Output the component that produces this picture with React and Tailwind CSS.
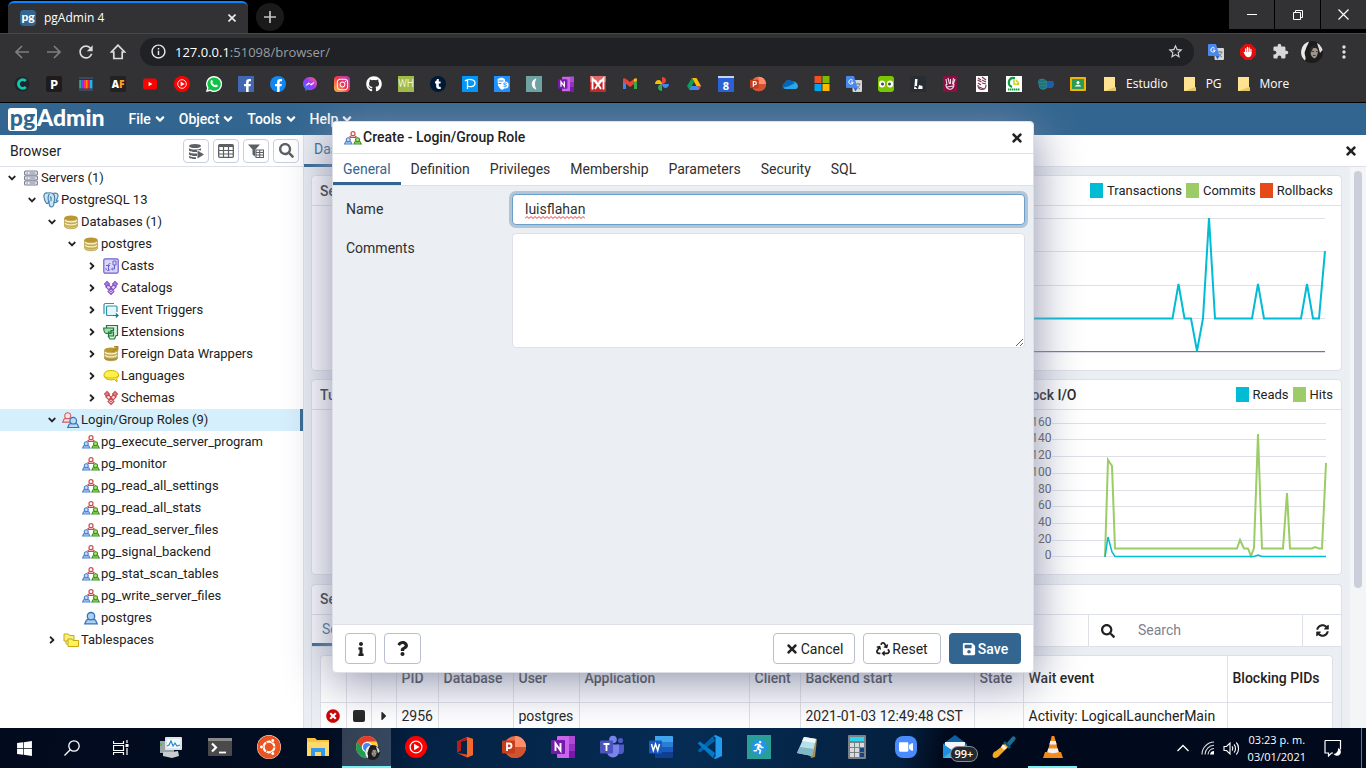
import React from "react";
import {
  FaAngleDown, FaAngleRight, FaTimes, FaSearch, FaSyncAlt, FaInfo, FaQuestion, FaRecycle, FaSave,
  FaWhatsapp, FaGithub, FaInstagram, FaFacebookF, FaTumblr, FaUbuntu,
  FaWindows, FaCaretRight, FaTimesCircle, FaVideo, FaRunning,
} from "react-icons/fa";
import { MdExtension, MdRefresh, MdOutlineStarBorder, MdMoreVert, MdOutlineInfo } from "react-icons/md";

const Svg = ({ s = 16, box = "0 0 16 16", className = "", children }) => (
  <svg width={s} height={s} viewBox={box} fill="none" className={`shrink-0 ${className}`} aria-hidden="true">
    {children}
  </svg>
);

/* ---------- shared brand marks ---------- */

const YtMusic = ({ s }) => (
  <Svg s={s}>
    <circle cx="8" cy="8" r="8" fill="#f00" />
    <circle cx="8" cy="8" r="4.3" stroke="#fff" strokeWidth="0.9" />
    <path d="M6.6 5.6L10.6 8L6.6 10.4Z" fill="#fff" />
  </Svg>
);

const OneNote = ({ s }) => (
  <Svg s={s} box="0 0 24 24">
    <rect x="6" y="1" width="18" height="22" rx="1" fill="#ca64ea" />
    <rect x="18" y="1" width="6" height="8" fill="#ae4bd5" />
    <rect x="18" y="9" width="6" height="7" fill="#9332bf" />
    <rect x="18" y="16" width="6" height="7" fill="#7719aa" />
    <rect x="0" y="5" width="14" height="14" rx="1" fill="#7719aa" />
    <path d="M4.500 16V8.500L9.500 15.500V8" stroke="#fff" strokeWidth="1.900" />
  </Svg>
);

const PowerPoint = ({ s }) => (
  <Svg s={s} box="0 0 24 24">
    <circle cx="13" cy="12" r="11" fill="#ed6c47" />
    <path d="M13 1a11 11 0 0 1 11 11H13Z" fill="#ff8f6b" />
    <path d="M2 12h22a11 11 0 0 1-22 0Z" fill="#d35230" />
    <rect x="0" y="5.500" width="13" height="13" rx="1" fill="#c43e1c" />
    <path d="M5 16V8.500h2.200a2.100 2.100 0 0 1 0 4.600H5" stroke="#fff" strokeWidth="1.800" />
  </Svg>
);

const Translate = () => (
  <Svg>
    <rect x="6.500" y="4" width="9.500" height="12" rx="1" fill="#d6d6d6" />
    <path d="M9.500 8h5M12 7v1.200M13.800 8c-.5 2.300-2 3.800-3.700 4.800M10.500 9.500c.8 1.600 2 2.700 3.500 3.500" stroke="#607d8b" strokeWidth="0.900" />
    <path d="M1 0h7l3.500 12H1a1 1 0 0 1-1-1V1a1 1 0 0 1 1-1Z" fill="#4a87ee" />
    <path d="M7.500 12h4L9.500 15.500Z" fill="#3367d6" />
    <path d="M6.600 4.300A2.200 2.200 0 1 0 7.200 6.200H5" stroke="#fff" strokeWidth="1" />
  </Svg>
);

const PgFavicon = () => (
  <span className="flex h-4 w-4 items-center justify-center rounded-sm bg-[#326690] font-['Lato',sans-serif] text-[12px] font-black leading-none text-white">
    <span className="pb-0.5">pg</span>
  </span>
);

const Avatar = ({ s }) => (
  <Svg s={s} box="0 0 22 22">
    <circle cx="11" cy="11" r="11" fill="#1c1c1c" />
    <path d="M8 .5A11 11 0 0 0 4 19.400C6 16 2 13 4.500 9C5.500 5 7 4 8 .5Z" fill="#e8e8e8" />
    <path d="M16 2a11 11 0 0 1 5.600 7L19 12Z" fill="#ddd" />
    <path d="M9 8c2-3 7-2.500 8 1.500 0 4-1.500 7-3.500 8C10 16 9 12 9 8Z" fill="#9d938d" />
    <path d="M8.500 9c0-5 8-6 9.500 0-2-2-5-2.500-6-1.500S10 12 9.500 13Z" fill="#2b2624" />
    <path d="M11 10.500h2M15 10.500h1.500M12 14.500h2.500" stroke="#2b2624" strokeWidth="0.800" />
  </Svg>
);

/* ---------- browser bookmarks ---------- */

const Tile = ({ cls, children }) => (
  <span className={`flex h-4 w-4 items-center justify-center overflow-hidden leading-none ${cls}`}>{children}</span>
);

const bookmarks = [
  ["Crehana", <Svg><circle cx="8" cy="8" r="7.500" fill="#212529" /><path d="M11.800 5A4.300 4.300 0 1 0 11.800 11" stroke="#0cc9b4" strokeWidth="2.800" /></Svg>],
  ["Platzi", <Tile cls="rounded-xs bg-[#1f1b1b] font-['Open_Sans',sans-serif] text-[13px] font-bold text-white">P</Tile>],
  ["Colors", <Svg><path d="M1 2h14M1 14h14" stroke="#3d5170" strokeWidth="1.500" /><path d="M2.200 4v8.500" stroke="#27b08d" strokeWidth="2" /><path d="M4.300 4v8.500" stroke="#7a3ff0" strokeWidth="2.200" /><path d="M6.500 4v8.500" stroke="#ff2d6f" strokeWidth="2.200" /><path d="M8.700 4v8.500" stroke="#ff8a00" strokeWidth="2.200" /><path d="M10.900 4v8.500" stroke="#ff1744" strokeWidth="2.200" /><path d="M13.200 4v8.500" stroke="#18b6f6" strokeWidth="2.400" /></Svg>],
  ["AnimeFLV", <Tile cls="rounded-xs bg-[#222] font-['Open_Sans',sans-serif] text-[10px] font-extrabold text-white">A<span className="text-[#ff9e1b]">F</span></Tile>],
  ["YouTube", <Svg><rect x="1" y="2.500" width="14" height="11" rx="2.500" fill="#f00" /><path d="M6.600 5.800L10.400 8L6.600 10.200Z" fill="#fff" /></Svg>],
  ["YouTube Music", <YtMusic s={16} />],
  ["WhatsApp", <Svg><path d="M8 0a8 8 0 0 0-6.900 12L0 16l4.200-1A8 8 0 1 0 8 0Z" fill="#fff" /><path d="M8 1.400a6.600 6.600 0 0 0-5.500 10.200L1.900 14l2.500-.6A6.600 6.600 0 1 0 8 1.400Z" fill="#10c245" /><path d="M5.200 4.300c.8-.5 1.200 0 1.700 1.400.1.400-.4.700-.6 1.100.7 1.300 1.500 2 2.800 2.500.4-.2.600-.9 1-.9 1.600.6 1.900 1 1.700 1.500-.9 1.800-2.700 1.600-4.600.6C5.300 9.500 3.500 6.500 5.200 4.300Z" fill="#fff" /></Svg>],
  ["Facebook", <Tile cls="items-end justify-end bg-[#4267b2] text-white"><FaFacebookF size={13} /></Tile>],
  ["Facebook", <Tile cls="items-end rounded-full bg-[#1486f0] text-white"><FaFacebookF size={13} /></Tile>],
  ["Messenger", <Svg><defs><linearGradient id="msg" x1="0" y1="1" x2="1" y2="0"><stop stopColor="#168aff" /><stop offset=".5" stopColor="#a033ff" /><stop offset="1" stopColor="#ff6a70" /></linearGradient></defs><path d="M8 1C4 1 1 3.900 1 7.700c0 2 .9 3.700 2.300 4.900V15l2.200-1.200c.8.200 1.600.4 2.500.4 4 0 7-2.900 7-6.600S12 1 8 1Z" fill="url(#msg)" /><path d="M4 9.500l2.600-2.800 2 1.600L12 6.500 9.400 9.200 7.400 7.700Z" fill="#fff" stroke="#fff" strokeWidth=".6" /></Svg>],
  ["Instagram", <Tile cls="rounded-sm bg-linear-to-tr from-[#fdbd3c] via-[#f0354f] to-[#b02ec2] text-white"><FaInstagram size={13} /></Tile>],
  ["GitHub", <FaGithub size={16} className="text-white" />],
  ["WebHost", <Tile cls="bg-[#9dba4b] font-['Roboto',sans-serif] text-[10px] text-[#eaf2cf]">WH</Tile>],
  ["Tumblr", <Tile cls="rounded-full bg-[#011935] text-white"><FaTumblr size={10} /></Tile>],
  ["Pixlr", <Svg><rect width="16" height="16" fill="#0096fa" /><path d="M5.500 13V4M3 5c3-2.500 10-2 10 2s-4.500 4-7.500 3" stroke="#fff" strokeWidth="1.300" /></Svg>],
  ["Skull", <Svg><rect width="16" height="16" fill="#1e90ff" /><path d="M3.500 3.500c2-2.500 6-2.500 7.500 0v4l-1 5c-1.500 2-3 1-4 0L4 9.500Z" fill="#fff" /><path d="M4.500 5h5M4.500 7.500h3" stroke="#1e90ff" /><circle cx="11" cy="9" r="3.600" fill="#fff" /><path d="M12.500 7.500c-1-1-3-.5-3 .5s3 .7 3 1.800-2 1.200-3 .4" stroke="#1e90ff" /></Svg>],
  ["Moon", <Svg><rect width="16" height="16" fill="#6fa3a3" /><path d="M10 3C5 4 5 12 10 13C8 11 8 5 10 3Z" fill="#fff" stroke="#fff" /></Svg>],
  ["OneNote", <OneNote s={16} />],
  ["Mega", <Svg><rect width="16" height="16" fill="#c62828" /><rect width="16" height="6" fill="#dd6a6a" /><path d="M2.500 13.500V2.500L8 9L13.500 2.500V13.500M5 13L11 4M11 13L5 4" stroke="#fff" strokeWidth="1.800" /></Svg>],
  ["Gmail", <Svg><path d="M1 3.500V13h3V7" fill="#4285f4" /><path d="M15 3.500V13h-3V7" fill="#34a853" /><path d="M12 6.500L15 4.500V3.500C15 2 13 2 12 3Z" fill="#fbbc04" /><path d="M1 3.500v2L8 11l4-3V3L8 6L4 3C3 2 1 2 1 3.500Z" fill="#ea4335" /></Svg>],
  ["Photos", <Svg><path d="M8 1c2.200 0 4 1.500 4 3.500S10.200 8 8 8Z" fill="#ea4335" /><path d="M15 8c0 2.200-1.500 4-3.500 4S8 10.200 8 8Z" fill="#4285f4" /><path d="M8 15c-2.200 0-4-1.500-4-3.500S5.800 8 8 8Z" fill="#34a853" /><path d="M1 8c0-2.200 1.500-4 3.500-4S8 5.800 8 8Z" fill="#fbbc04" /></Svg>],
  ["Drive", <Svg><path d="M6 2h4.500L15 10h-4.500Z" fill="#fbbc04" /><path d="M5.800 2L8 6L3.500 14L1 10Z" fill="#0f9d58" /><path d="M5.300 10H15l-2.300 4H3.300Z" fill="#4285f4" /><path d="M12 10h3l-2.200 4Z" fill="#ea4335" /></Svg>],
  ["Calendar", <Tile cls="border-t-2 border-[#c9d3e6] bg-[#2a62d6] font-['Open_Sans',sans-serif] text-[11px] font-bold text-white">8</Tile>],
  ["PowerPoint", <PowerPoint s={16} />],
  ["OneDrive", <Svg><path d="M3 13a3 3 0 0 1-.5-5.500C3.500 4 7.500 2.500 10 5.500c3-.5 5.500 1 6 4.500 0 2-1 3-2.500 3Z" fill="#28a8ea" /><path d="M2.500 7.500C3.500 4 7.500 2.500 10 5.500L13 7 6 10.500 1 11.500C-.5 10 .5 8 2.500 7.500Z" fill="#0364b8" /></Svg>],
  ["Microsoft", <Svg><path d="M.5 0h7v7h-7Z" fill="#f25022" /><path d="M8.500 0h7v7h-7Z" fill="#7fba00" /><path d="M.5 8h7v7h-7Z" fill="#00a4ef" /><path d="M8.500 8h7v7h-7Z" fill="#ffb900" /></Svg>],
  ["Translate", <Translate />],
  ["Duolingo", <Svg><rect width="16" height="16" rx="3" fill="#78c800" /><rect x="1" y="4.500" width="6" height="7" rx="3" fill="#fff" /><rect x="9" y="4.500" width="6" height="7" rx="3" fill="#fff" /><circle cx="4.500" cy="8" r="1.500" fill="#444" /><circle cx="11.500" cy="8" r="1.500" fill="#444" /><path d="M6.500 9.500h3L8 11.500Z" fill="#f90" /></Svg>],
  ["Lucid", <Svg><rect width="16" height="16" rx="1" fill="#282c33" /><path d="M5 3h2.500L7 10H4.500ZM4.500 10l3 3H4ZM9 9l3.500 1v3H8Z" fill="#fff" /></Svg>],
  ["IPN", <Svg><rect x="1" width="14" height="16" fill="#8a0f45" /><path d="M4 3l1 6M6 2l1.500 6M8.500 3v5M11.500 2l-1 6M13 3l-2 6M4 8c-1 6 8 8 8 0M5 11l6-1" stroke="#f3dbe5" strokeWidth="1.100" /></Svg>],
  ["IPN", <Svg><rect x="2" width="12" height="16" fill="#fff" /><path d="M4 2l3 2M8 1l4 3M3.500 4l4 2M8 4l4 2M4 7l3 2M8 7l4 1M4 9c0 6 8 6 8 0M5 11l5 2" stroke="#7b3a55" strokeWidth="1.200" /></Svg>],
  ["UPIICSA", <Svg><rect width="16" height="16" fill="#fff" /><path d="M9 2C2 1 1 9 6 11" stroke="#0a9d3c" strokeWidth="2.200" /><path d="M8 3v5l5 .5M10 4l3 4" stroke="#c5cf1c" strokeWidth="1.400" /><path d="M2 13.500h12" stroke="#0a9d3c" strokeWidth="2" strokeDasharray="1.500 .5" /></Svg>],
  ["Hand", <Svg><path d="M0 6c0-3 3-4 6-3l3 2h6l1 4-2 3H9c-3 3-7 2-8-1Z" fill="#287f8f" /><path d="M9 5h6l1 4-2 3H9Z" fill="#1b5fa8" /><path d="M1 5h6M1 8h7M2 11h6" stroke="#1c6b60" strokeWidth="1" /></Svg>],
  ["Classroom", <Svg><rect y="1" width="16" height="14" rx="1" fill="#f4b400" /><rect x="2" y="3" width="12" height="10" fill="#2b9b57" /><circle cx="8" cy="6.500" r="1.500" fill="#fff" /><path d="M5 10.500c0-2.500 6-2.500 6 0Z" fill="#fff" /></Svg>],
];

const folders = ["Estudio", "PG", "More"];

const FolderIcon = () => (
  <svg width="12" height="14" viewBox="0 0 12 14" aria-hidden="true">
    <path d="M0 0h11v10l1 1v3H0Z" fill="#ffe391" />
    <path d="M9.500 10.500h2.500V14H1" fill="#e5c566" />
  </svg>
);

function BrowserChrome() {
  return (
    <header className="flex shrink-0 flex-col bg-black font-['Open_Sans','Noto_Sans',sans-serif] text-white">
      <div className="flex h-[33px] items-end">
        <div className="ml-2 flex h-8 w-60 items-center gap-2 rounded-t-md border-t-2 border-[#0a84ff] bg-[#323234] pl-3 pr-2">
          <PgFavicon />
          <span className="flex-1 text-[12px] leading-4">pgAdmin 4</span>
          <button aria-label="Close tab" className="flex h-4 w-4 items-center justify-center">
            <Svg s={8} box="0 0 8 8"><path d="M.5 .5L7.500 7.500M7.500 .5L.5 7.500" stroke="#eee" strokeWidth="1.600" /></Svg>
          </button>
        </div>
        <button aria-label="New tab" className="mb-0.5 ml-2 flex h-7 w-7 items-center justify-center rounded-full bg-[#1a1a1a]">
          <Svg s={12} box="0 0 12 12"><path d="M6 0V12M0 6H12" stroke="#c4c4c4" strokeWidth="1.700" /></Svg>
        </button>
        <div className="ml-auto flex gap-px self-start">
          <button aria-label="Minimize" className="flex h-[29px] w-[45px] items-center justify-center bg-[#323234]">
            <Svg s={10} box="0 0 10 10"><path d="M0 4.500H10" stroke="#fff" /></Svg>
          </button>
          <button aria-label="Restore" className="flex h-[29px] w-[45px] items-center justify-center bg-[#323234]">
            <Svg s={10} box="0 0 10 10"><path d="M.5 2.500h7v7h-7ZM2.500 2.500V.5h7v7h-2" stroke="#fff" /></Svg>
          </button>
          <button aria-label="Close window" className="flex h-[29px] w-[45px] items-center justify-center bg-[#323234]">
            <Svg s={11} box="0 0 11 11"><path d="M.5 .5L10.500 10.500M10.500 .5L.5 10.500" stroke="#fff" strokeWidth="1.200" /></Svg>
          </button>
        </div>
      </div>
      <div className="flex h-[36px] items-center border-t border-[#48484a] bg-[#323234] pl-3.5 pr-1.5">
        <button aria-label="Back" className="flex w-8 shrink-0">
          <Svg s={16}><path d="M15 8H2M8 2L2 8L8 14" stroke="#7e7e80" strokeWidth="1.700" /></Svg>
        </button>
        <button aria-label="Forward" className="flex w-8 shrink-0">
          <Svg s={16}><path d="M1 8H14M8 2L14 8L8 14" stroke="#7e7e80" strokeWidth="1.700" /></Svg>
        </button>
        <button aria-label="Reload" className="flex w-8 shrink-0"><MdRefresh size={20} className="-ml-0.5 text-[#dcdcdc]" /></button>
        <button aria-label="Home" className="flex w-[30px] shrink-0">
          <Svg s={16}><path d="M8 1.200L1.500 8H3.800V14.500H12.200V8H14.500Z" stroke="#dcdcdc" strokeWidth="1.700" /></Svg>
        </button>
        <div className="flex h-7 flex-1 items-center rounded-full bg-[#202124] pl-2.5 pr-2.5">
          <MdOutlineInfo size={17} className="text-[#e8eaed]" />
          <span className="ml-2 flex-1 text-[13px] leading-5 text-white">127.0.0.1<span className="text-[#9a9da1]">:51098/browser/</span></span>
          <MdOutlineStarBorder size={17} className="text-[#d5d5d5]" />
        </div>
        <div className="ml-1.5 flex items-center">
          <span className="flex w-8 justify-center"><Translate /></span>
          <span className="flex w-8 justify-center">
            <Svg><path d="M5 0h6l5 5v6l-5 5H5L0 11V5Z" fill="#e40d0d" /><path d="M5.600 9V4.800M7.400 8V3.400M9.200 8V3.800M10.900 9V5.400" stroke="#fff" strokeWidth="1.300" strokeLinecap="round" /><path d="M5 8h6.500v2c0 2-1.300 3.200-3.200 3.200-1.800 0-2.600-.8-3.300-2.200L3.600 8.600c-.3-.9.700-1.200 1.400-.3Z" fill="#fff" /></Svg>
          </span>
          <span className="flex w-8 justify-center"><MdExtension size={17} className="text-[#d8d8d8]" /></span>
          <span className="flex w-8 justify-center"><Avatar s={22} /></span>
          <button aria-label="Menu" className="flex w-8 justify-center"><MdMoreVert size={20} className="text-[#e0e0e0]" /></button>
        </div>
      </div>
      <nav aria-label="Bookmarks" className="mb-px flex h-[33px] items-center gap-4 bg-[#323234] pb-[3px] pl-3.5">
        {bookmarks.map(([name, icon], i) => (
          <a key={i} href="#" aria-label={name} className="flex h-4 w-4 shrink-0 items-center justify-center">{icon}</a>
        ))}
        <div className="ml-0.5 flex items-center gap-4">
          {folders.map((f) => (
            <a key={f} href="#" className="flex items-center gap-2.5 text-[12px] leading-4"><FolderIcon />{f}</a>
          ))}
        </div>
      </nav>
    </header>
  );
}

/* ---------- object tree ---------- */

const Person = ({ x, y, w, stroke, fill }) => (
  <g transform={`translate(${x} ${y}) scale(${w / 14})`} fill={fill} stroke={stroke} strokeWidth="1.300">
    <path d="M.8 12.300L2.500 8.600C3 8 4 7.800 5 7.800h4c1 0 2 .2 2.500.8l1.700 3.700Z" />
    <circle cx="7" cy="4.700" r="3.700" />
  </g>
);

const SmallPerson = ({ x, y, stroke, fill }) => (
  <g transform={`translate(${x} ${y})`} fill={fill} stroke={stroke} strokeWidth="1.100">
    <path d="M.6 7L1.700 4.800h5.100L7.900 7Z" />
    <circle cx="4.250" cy="2.700" r="2" />
  </g>
);

const GroupRole = () => (
  <svg width="18" height="16" viewBox="0 0 18 16" aria-hidden="true" className="shrink-0">
    <path d="M6.500 5.500L3.500 8.500M11.500 5.500L14.500 8.500" stroke="#cf9a9a" fill="none" />
    <path d="M6 7.500L7 5.800H11L12 7.500Z" fill="#fff" stroke="#c84b4b" />
    <circle cx="9" cy="3.700" r="2" fill="#fff" stroke="#c84b4b" strokeWidth="1.200" />
    <SmallPerson x={0} y={7} stroke="#4a80cc" fill="#c3dbf5" />
    <SmallPerson x={9.300} y={7} stroke="#3c8f22" fill="#a9e468" />
  </svg>
);

const Db = ({ open }) => (
  <Svg s={16}>
    <path d="M1.500 10.500c1 3 12 3 13 0v2c-1 3-12 3-13 0Z" fill={open ? "#a98f3a" : "#e0c863"} stroke="#a8892a" strokeWidth=".6" />
    <path d="M1.500 7.500c1 3 12 3 13 0v2.300c-1 3-12 3-13 0Z" fill="#fff0b3" stroke="#a8892a" strokeWidth=".7" />
    <path d="M1.500 4.500c1 3 12 3 13 0v2.300c-1 3-12 3-13 0Z" fill="#fff6cf" stroke="#a8892a" strokeWidth=".7" />
    <ellipse cx="8" cy="4" rx="6.700" ry="2.400" fill="#b8982f" />
    {open && <path d="M9.500 6L14.500 1M11 .8h3.700v3.700" stroke="#a8892a" strokeWidth="1.400" />}
  </Svg>
);

const Hearts = ({ stroke, fill }) => (
  <Svg s={16}>
    <g fill={fill} stroke={stroke} strokeWidth="1.100">
      <path d="M4 1.500L6.500 4L4 6.500L1.500 4ZM12 1.500L14.500 4L12 6.500L9.500 4Z" />
      <path d="M5.800 5L8.200 7.400L5.800 9.800L2.800 6.800ZM10.200 5L13.200 6.800L10.200 9.800L7.800 7.400ZM8 8.500L11 11.500L8 14.500L5 11.500Z" />
    </g>
    <path d="M4 3.200v1.600M3.200 4h1.600M12 3.200v1.600M11.200 4h1.600M8 10.700v1.600M7.200 11.500h1.600" stroke={stroke} strokeWidth=".9" />
  </Svg>
);

const icons = {
  servers: (
    <Svg>{[1, 6, 11].map((y) => (
      <g key={y}><rect x="1.600" y={y} width="12.800" height="4" rx="1" fill="#eef0f6" stroke="#777a92" strokeWidth="1.100" /><path d="M3.500 2h1.500M6.500 2h6" transform={`translate(0 ${y})`} stroke="#777a92" /></g>
    ))}</Svg>
  ),
  pg: (
    <Svg><path d="M5 1C2 .5 .5 2 1 5c.5 3.500 2 7 3.500 6.500L6 10c0 2.500.5 5 2.500 5s2.300-2 2.500-4.500c1.500.4 3-.2 4-1.500-1 0-2 0-1.500-1C15 5.500 16 2 13.500 1.300 12 .8 11 1 10 1.500 8.500.8 6.500.6 5 1Z" fill="#cfe2f0" stroke="#4583ad" strokeWidth="1.200" /><path d="M6 10C4.500 7 5 3 6.500 2M10 1.500C12 3.500 12 7 11 10.500M8 5v4" stroke="#4583ad" strokeWidth="1.200" /><circle cx="7.500" cy="5" r=".7" fill="#4583ad" /></Svg>
  ),
  db: <Db />,
  fdw: <Db open />,
  casts: (
    <Svg><rect x=".8" y=".8" width="14.400" height="14.400" rx="1.500" fill="#dcd6fb" stroke="#6a60cc" strokeWidth="1.200" /><path d="M3 7.500h4M5.500 12.500V7c0-1 .5-1.500 1.800-1.500M3 10c-.5 2.500 3 3.500 4 1.500M13 3h-3v4h3ZM11.500 7v4H9M10 9.500L8.500 11 10 12.500" stroke="#6a60cc" strokeWidth="1" /></Svg>
  ),
  catalogs: <Hearts stroke="#8250c4" fill="#e2d2f7" />,
  schemas: <Hearts stroke="#c8454b" fill="#f9dada" />,
  triggers: (
    <Svg><path d="M11 1.500H2.500A1.500 1.500 0 0 0 1 3v9" stroke="#2f94a8" strokeWidth="1.200" /><path d="M14 10V5a1 1 0 0 0-1-1H4.500a1 1 0 0 0-1 1v7.500a1 1 0 0 0 1 1H11" fill="#e4f7fa" stroke="#2f94a8" strokeWidth="1.200" /><path d="M10 13.500h5M12.800 11.500l2.200 2-2.200 2" stroke="#17788c" strokeWidth="1.200" /></Svg>
  ),
  extensions: (
    <Svg><path d="M3.500 4V1.500h11v10H13l-1.500 3.500H7L5 12" fill="#d8f0dc" stroke="#1e7a39" strokeWidth="1.200" /><path d="M.7 4h9.800v2.500H8v3H3.500C2 9.500.7 7.500.7 4ZM5.500 8h5v4h-5Z" fill="#a6dbb1" stroke="#1e7a39" strokeWidth="1.200" /></Svg>
  ),
  languages: (
    <Svg><path d="M8 2.500c-4.500 0-7 1.700-7 4.500s2.500 4.800 7 4.800c1.500 0 2.500 0 3.500-.3l2.500 2.500-.3-3.500C15 9.700 15.500 8.500 15.500 7c0-2.800-3-4.500-7.500-4.500Z" fill="#fdf04a" stroke="#cfb000" strokeWidth="1" /><path d="M1.500 8.500c2 2 11 2 13.500 0" stroke="#cfb000" strokeWidth=".8" /></Svg>
  ),
  roles: (
    <svg width="18" height="16" viewBox="0 0 18 16" className="shrink-0" aria-hidden="true">
      <Person x={0} y={0} w={11.500} stroke="#cf5a5f" fill="#fbe3e3" />
      <Person x={5} y={4.500} w={12.500} stroke="#3a70b8" fill="#b9dcf3" />
    </svg>
  ),
  group: <GroupRole />,
  user: <Svg><Person x={1} y={1.500} w={14} stroke="#3a70b8" fill="#a9d2f0" /></Svg>,
  tablespaces: (
    <Svg><path d="M1 2h4.500l1 1.500H11V9H1Z" fill="#f7ef7c" stroke="#c9a912" /><path d="M5 7h4l1 1.500h5.500v6H5Z" fill="#fdf45c" stroke="#c9a912" /><path d="M3 9v3h2" stroke="#c9a912" /></Svg>
  ),
};

const tree = [
  ["pl-2", "d", "servers", "Servers (1)"],
  ["pl-7", "d", "pg", "PostgreSQL 13"],
  ["pl-12", "d", "db", "Databases (1)"],
  ["pl-[68px]", "d", "db", "postgres"],
  ["pl-[88px]", "r", "casts", "Casts"],
  ["pl-[88px]", "r", "catalogs", "Catalogs"],
  ["pl-[88px]", "r", "triggers", "Event Triggers"],
  ["pl-[88px]", "r", "extensions", "Extensions"],
  ["pl-[88px]", "r", "fdw", "Foreign Data Wrappers"],
  ["pl-[88px]", "r", "languages", "Languages"],
  ["pl-[88px]", "r", "schemas", "Schemas"],
  ["pl-12", "d", "roles", "Login/Group Roles (9)", true],
  ["pl-[68px]", "", "group", "pg_execute_server_program"],
  ["pl-[68px]", "", "group", "pg_monitor"],
  ["pl-[68px]", "", "group", "pg_read_all_settings"],
  ["pl-[68px]", "", "group", "pg_read_all_stats"],
  ["pl-[68px]", "", "group", "pg_read_server_files"],
  ["pl-[68px]", "", "group", "pg_signal_backend"],
  ["pl-[68px]", "", "group", "pg_stat_scan_tables"],
  ["pl-[68px]", "", "group", "pg_write_server_files"],
  ["pl-[68px]", "", "user", "postgres"],
  ["pl-12", "r", "tablespaces", "Tablespaces"],
];

const ToolButton = ({ label, children }) => (
  <button aria-label={label} className="flex h-6 w-[26px] items-center justify-center rounded border border-[#c9cfdb] bg-white text-[#5c5f64]">
    {children}
  </button>
);

function Sidebar() {
  return (
    <aside className="flex w-[304px] shrink-0 flex-col border-r border-[#dde0e6] bg-white">
      <div className="flex h-8 shrink-0 items-center gap-1 border-b border-[#dde0e6] pl-2.5 pr-1">
        <h2 className="flex-1 text-[14px] leading-5">Browser</h2>
        <ToolButton label="Query tool">
          <Svg><ellipse cx="7" cy="3" rx="6" ry="2" fill="currentColor" /><path d="M1 5c1 2 11 2 12 0v2.500L9 7v2C6 9 2 9 1 7.500ZM1 9c1 1.500 5 1.500 8 1.500V13C6 13 2 13 1 11.500ZM1 13c1 1 5 1.300 7 1.300V16C6 16 2 16 1 14.500Z" fill="currentColor" /><path d="M9.500 7.500L16 11.500L9.500 15.500Z" fill="currentColor" /></Svg>
        </ToolButton>
        <ToolButton label="View data">
          <Svg><rect x=".7" y="1.700" width="14.600" height="12.600" rx="1" stroke="currentColor" strokeWidth="1.300" /><path d="M1 2h14v2H1Z" fill="currentColor" /><path d="M1 7.500h14M1 11h14M5.500 3v11M10.500 3v11" stroke="currentColor" strokeWidth="1.200" /></Svg>
        </ToolButton>
        <ToolButton label="Filtered rows">
          <Svg><path d="M0 1.500h12L7.500 6.500V14L4.500 11.500V6.500Z" fill="currentColor" /><rect x="7.500" y="6.500" width="8.500" height="8.500" fill="#fff" /><path d="M8 7h7.500v7.500H8ZM8 9.500h7.500M8 12h7.500M11.700 7v7.500" stroke="currentColor" strokeWidth="1.100" /></Svg>
        </ToolButton>
        <ToolButton label="Search objects"><FaSearch size={15} /></ToolButton>
      </div>
      <ul className="flex flex-col text-[13px]">
        {tree.map(([pad, arrow, icon, label, selected], i) => (
          <li key={i} className={`flex h-[22px] items-center ${pad} ${selected ? "border-r-3 border-[#326690] bg-[#d6effc]" : ""}`}>
            <span className="flex w-3.5 shrink-0">
              {arrow === "d" && <FaAngleDown size={12} className="-ml-0.5" />}
              {arrow === "r" && <FaAngleRight size={12} className="-ml-0.5" />}
            </span>
            <span className="mr-px flex w-[18px] shrink-0 justify-center">{icons[icon]}</span>
            <span className="whitespace-nowrap">{label}</span>
          </li>
        ))}
      </ul>
    </aside>
  );
}

/* ---------- dashboard ---------- */

const Legend = ({ items }) => (
  <span className="flex items-center gap-1 text-[13px]">
    {items.map(([color, name]) => (
      <span key={name} className="flex items-center gap-1">
        <span className={`h-[15px] w-[13px] ${color}`} />
        {name}
      </span>
    ))}
  </span>
);

const Card = ({ title, legend, cls, children }) => (
  <section className={`flex flex-col rounded border border-[#dde0e6] bg-white ${cls}`}>
    <div className="flex h-[30px] shrink-0 items-center justify-between border-b border-[#dde0e6] px-2">
      <h3 className="text-[14px] font-medium leading-5">{title}</h3>
      {legend && <Legend items={legend} />}
    </div>
    <div className="flex h-[164px] justify-end overflow-hidden">{children}</div>
  </section>
);

const TpsChart = () => (
  <svg width="600" height="164" viewBox="0 0 600 164" fill="none" className="shrink-0" aria-label="Transactions per second chart">
    {[12, 45, 79, 112, 146].map((y) => <path key={y} d={`M30 ${y}.5H584`} stroke="#dde0e6" />)}
    <path d="M30 145.500H584" stroke="#d8532c" />
    <path d="M30 112.500H431.500L437.500 78L443.500 112.500H450L456 145L462 112.500L468 12L474 112.500H511L517 78L523 112.500H560L566 78L572 112.500H578L584 45" stroke="#00bcd4" strokeWidth="2" />
  </svg>
);

const ioTicks = [[13, 160], [29, 140], [46, 120], [63, 100], [80, 80], [96, 60], [113, 40], [130, 20], [146, 0]];

const IoChart = () => (
  <svg width="337" height="164" viewBox="0 0 337 164" fill="none" className="shrink-0" aria-label="Block I/O chart">
    {ioTicks.map(([y, v]) => (
      <g key={v}>
        <path d={`M48 ${y}.5H322`} stroke="#dde0e6" />
        <text x="47.500" y={y + 3} textAnchor="end" fontSize="12" fill="#545454">{v}</text>
      </g>
    ))}
    <path d="M101 147L104 50L108 56L111 138.500H233L236 130L240 138.500H244L247 146L250 138L254 24L258 138.500H279L283 83L286 138.500H308L311 137L315 138.500H318L322 53" stroke="#9ccc65" strokeWidth="2" />
    <path d="M101 147L104 127L108 142L111 146.500H250L254 145L258 146.500H322" stroke="#00bcd4" strokeWidth="1.500" />
  </svg>
);

const columns = [
  ["", "w-[25px]"], ["", "w-[25px]"], ["", "w-[25px]"], ["PID", "w-[42px]"], ["Database", "w-[75px]"], ["User", "w-[66px]"],
  ["Application", "w-[170px]"], ["Client", "w-[51px]"], ["Backend start", "w-[174px]"], ["State", "w-[49px]"],
  ["Wait event", "w-[204px]"], ["Blocking PIDs", ""],
];

const cells = [
  <FaTimesCircle size={14} className="mx-auto text-[#cc0000]" />,
  <span className="mx-auto block h-3 w-3 rounded-xs bg-[#222]" />,
  <FaCaretRight size={14} className="mx-auto" />,
  "2956", "", "postgres", "", "", "2021-01-03 12:49:48 CST", "", "Activity: LogicalLauncherMain", "",
];

function Dashboard() {
  return (
    <main className="flex min-w-0 flex-1 flex-col bg-[#ebeef3]">
      <div className="flex h-8 shrink-0 items-center justify-between border-b border-[#dde0e6] bg-white pr-2">
        <a href="#" className="flex h-8 items-center border-b-3 border-[#326690] bg-[#ebeef3] px-2.5 text-[14px] text-[#326690]">Dashboard</a>
        <button aria-label="Close panel"><FaTimes size={14} /></button>
      </div>
      <div className="flex min-h-0 flex-1">
        <div className="flex min-w-0 flex-1 flex-col gap-2 overflow-hidden pl-[7px] pr-2 pt-2">
          <div className="flex gap-2">
            <Card title="Server sessions" cls="flex-2" />
            <Card
              title="Transactions per second"
              cls="flex-3"
              legend={[["bg-[#00bcd4]", "Transactions"], ["bg-[#9ccc65]", "Commits"], ["bg-[#e64a19]", "Rollbacks"]]}
            >
              <TpsChart />
            </Card>
          </div>
          <div className="flex gap-2">
            <Card title="Tuples in" cls="flex-1" />
            <Card title="Tuples out" cls="flex-1" />
            <Card title="Block I/O" cls="w-[332px] shrink-0" legend={[["bg-[#00bcd4]", "Reads"], ["bg-[#9ccc65]", "Hits"]]}>
              <IoChart />
            </Card>
          </div>
          <section className="mt-px flex min-h-0 flex-1 flex-col rounded-t border border-b-0 border-[#dde0e6]">
            <h3 className="flex h-[30px] shrink-0 items-center rounded-t border-b border-[#dde0e6] bg-white px-2 text-[14px] font-medium">Server activity</h3>
            <div className="flex h-8 shrink-0 border-b border-[#dde0e6] bg-white">
              <a href="#" className="flex items-center border-b-3 border-[#326690] px-2.5 text-[14px] text-[#326690]">Sessions</a>
              <label className="ml-auto flex w-[214px] items-center border-l border-[#dde0e6]">
                <span className="flex w-[38px] justify-center"><FaSearch size={14} /></span>
                <input
                  type="search"
                  aria-label="Search sessions"
                  placeholder="Search"
                  className="w-40 bg-transparent pl-[11px] text-[14px] outline-none placeholder:text-[#7b818f]"
                />
              </label>
              <button aria-label="Refresh" className="flex w-[39px] items-center justify-center border-l border-[#dde0e6]"><FaSyncAlt size={13} /></button>
            </div>
            <div className="min-h-0 flex-1 overflow-hidden px-2 pt-2">
              <div className="overflow-hidden rounded-t border border-b-0 border-[#dde0e6] bg-white">
                <table className="w-full table-fixed border-collapse text-left text-[14px]">
                  <thead>
                    <tr className="h-[46px] border-b border-[#dde0e6]">
                      {columns.map(([name, w], i) => (
                        <th key={i} className={`whitespace-nowrap border-r border-[#dde0e6] pl-[5px] font-medium last:border-r-0 ${w}`}>{name}</th>
                      ))}
                    </tr>
                  </thead>
                  <tbody>
                    <tr className="h-7">
                      {cells.map((c, i) => (
                        <td key={i} className={`whitespace-nowrap border-r border-[#dde0e6] last:border-r-0 ${i > 2 ? "pl-[5px]" : ""}`}>{c}</td>
                      ))}
                    </tr>
                  </tbody>
                </table>
              </div>
            </div>
          </section>
        </div>
        <div className="flex w-4 shrink-0 justify-center bg-[#f4f5f7] pt-1">
          <span className="h-[417px] w-2 rounded-full bg-[#cbcfdb]" />
        </div>
      </div>
    </main>
  );
}

/* ---------- dialog ---------- */

const tabs = ["General", "Definition", "Privileges", "Membership", "Parameters", "Security", "SQL"];

const plainButton = "flex h-[31px] items-center justify-center gap-0.5 rounded border border-[#b9bfce] bg-white text-[14px] leading-5";

const SpellingMark = () => (
  <svg width="60" height="3" viewBox="0 0 60 3" fill="none" className="pointer-events-none absolute left-[13px] top-[22px]" aria-hidden="true">
    <path
      d="M0 2.500l2-2 2 2 2-2 2 2 2-2 2 2 2-2 2 2 2-2 2 2 2-2 2 2 2-2 2 2 2-2 2 2 2-2 2 2 2-2 2 2 2-2 2 2 2-2 2 2 2-2 2 2 2-2 2 2 2-2 2 2"
      stroke="#f02c2c"
    />
  </svg>
);

function RoleDialog() {
  return (
    <div className="pointer-events-none absolute inset-x-0 top-[18px] flex justify-center">
      <div
        role="dialog"
        aria-labelledby="dialog-title"
        className="pointer-events-auto flex h-[552px] w-[702px] flex-col rounded border border-[#dde0e6] bg-white text-[#303030] shadow-[0_8px_48px_rgb(138,142,168)]"
      >
        <div className="flex h-8 shrink-0 items-center border-b border-[#dde0e6] pl-[11px] pr-[9px] text-[#222222]">
          <GroupRole />
          <h2 id="dialog-title" className="ml-px flex-1 text-[14px] font-medium">Create - Login/Group Role</h2>
          <button aria-label="Close dialog"><FaTimes size={14} /></button>
        </div>
        <div role="tablist" className="flex h-8 shrink-0 border-b border-[#dde0e6] text-[14px]">
          {tabs.map((t, i) => (
            <button
              key={t}
              role="tab"
              aria-selected={i === 0}
              className={`border-b-3 px-2.5 pt-0.5 ${i === 0 ? "border-[#326690] text-[#326690]" : "border-transparent"}`}
            >
              {t}
            </button>
          ))}
        </div>
        <div className="flex flex-1 flex-col gap-2 bg-[#ebeef3] py-2 pl-[13px] pr-2 text-[14px]">
          <div className="flex">
            <label htmlFor="role-name" className="w-[166px] shrink-0 pt-[5px] leading-5">Name</label>
            <div className="relative flex min-w-0 flex-1">
              <input
                id="role-name"
                defaultValue="luisflahan"
                className="h-[31px] min-w-0 flex-1 rounded border border-[#6b9fcb] bg-white px-3 pb-0.5 shadow-[0_0_0_3px_rgba(50,102,144,0.3)] outline-none"
              />
              <SpellingMark />
            </div>
          </div>
          <div className="flex">
            <label htmlFor="role-comments" className="w-[166px] shrink-0 pt-[5px] leading-5">Comments</label>
            <textarea id="role-comments" className="h-[115px] min-w-0 flex-1 rounded border border-[#dde0e6] bg-white px-3 py-1 outline-none" />
          </div>
        </div>
        <div className="flex h-12 shrink-0 items-center gap-2 border-t border-[#dde0e6] px-3 text-[#222222]">
          <button aria-label="Information" className={`${plainButton} w-[31px]`}><FaInfo size={14} /></button>
          <button aria-label="Help" className={`${plainButton} w-[37px]`}><FaQuestion size={15} /></button>
          <button className={`${plainButton} ml-auto w-[82px]`}><FaTimes size={14} />Cancel</button>
          <button className={`${plainButton} w-[78px]`}><FaRecycle size={14} />Reset</button>
          <button className="flex h-[31px] w-[72px] items-center justify-center gap-0.5 rounded bg-[#326690] text-[14px] font-medium leading-5 text-white"><FaSave size={14} />Save</button>
        </div>
      </div>
    </div>
  );
}

/* ---------- desktop taskbar ---------- */

const Chrome = () => (
  <span className="relative">
    <Svg s={24} box="0 0 24 24">
      <circle cx="12" cy="12" r="11" fill="#ffcd40" />
      <path d="M2.500 6.500A11 11 0 0 1 21.500 6.500H12L7 14Z" fill="#e33b2e" />
      <path d="M2.500 6.500A11 11 0 0 0 11.500 23L16 15 8 15Z" fill="#1f9d55" />
      <circle cx="12" cy="12" r="5.200" fill="#fff" /><circle cx="12" cy="12" r="4" fill="#4285f4" />
    </Svg>
    <span className="absolute left-2.5 top-2.5"><Avatar s={15} /></span>
  </span>
);

const apps = [
  ["Resource Monitor", <Svg s={24} box="0 0 24 24"><rect x="1" y="6" width="14" height="12" fill="#9aa4ab" /><rect x="6" y="2" width="17" height="13" rx="1" fill="#dfe6ea" /><rect x="8" y="4" width="13" height="9" fill="#f4fbff" /><path d="M8 11l2-1 2-4 2 5 2-3 2 3 3-1" stroke="#2b8bc4" strokeWidth="1.200" /><path d="M4 17h9l6-1 1 5-7 2-9-2Z" fill="#c9cdd0" /><path d="M2 8v3" stroke="#58c322" strokeWidth="2" /></Svg>],
  ["Terminal", <Svg s={24} box="0 0 24 24"><rect y="3" width="24" height="18" rx="1" fill="#4a4a4a" /><rect y="3" width="24" height="3" fill="#8a8a8a" /><path d="M4 8.500l4 4-4 4" stroke="#fff" strokeWidth="2.200" /><path d="M11 17.500h7" stroke="#fff" strokeWidth="1.800" /></Svg>],
  ["Ubuntu", <span className="flex h-6 w-6 items-center justify-center rounded-full bg-white text-[#e95420]"><FaUbuntu size={24} /></span>],
  ["Files", <Svg s={24} box="0 0 24 24"><path d="M1 3h8l2 2h12v16H1Z" fill="#f5c542" /><path d="M1 7h22v14H1Z" fill="#ffd96b" /><path d="M5 21v-8h14v8h-4v-4H9v4Z" fill="#2f9bea" /></Svg>],
  ["Chrome", <Chrome />],
  ["YouTube Music", <YtMusic s={22} />],
  ["Office", <Svg s={24} box="0 0 24 24"><path d="M4 6.500L14 2l6 2v16l-6 2.500L4 18l10 1.500V5L8 6.500v9L4 17.500Z" fill="#e64a19" /><path d="M14 2l6 2v16l-6 2.500Z" fill="#f06a2c" /><path d="M4 6.500L14 2v3L8 6.500v9L4 17.500Z" fill="#b71c1c" /></Svg>],
  ["PowerPoint", <PowerPoint s={24} />],
  ["OneNote", <OneNote s={24} />],
  ["Teams", <Svg s={24} box="0 0 24 24"><circle cx="20.500" cy="5.500" r="2.600" fill="#5059c9" /><path d="M17 9.500h7v6c0 3-3 5-6 3Z" fill="#5059c9" /><circle cx="13" cy="4.500" r="3.800" fill="#7b83eb" /><path d="M7 9.500h12v7a6 6 0 0 1-12 0Z" fill="#7b83eb" /><rect y="5.500" width="13" height="13" rx="1" fill="#4b53bc" /><path d="M3.500 9h6M6.500 9v7" stroke="#fff" strokeWidth="1.800" /></Svg>],
  ["Word", <Svg s={24} box="0 0 24 24"><path d="M6 1h17a1 1 0 0 1 1 1v5H6Z" fill="#41a5ee" /><path d="M6 7h18v5H6Z" fill="#2b7cd3" /><path d="M6 12h18v5H6Z" fill="#185abd" /><path d="M6 17h18v5a1 1 0 0 1-1 1H6Z" fill="#103f91" /><rect y="5.500" width="13" height="13" rx="1" fill="#185abd" /><path d="M2.500 9l1.800 6.500L6.500 9l2.200 6.500L10.500 9" stroke="#fff" strokeWidth="1.500" /></Svg>],
  ["VS Code", <Svg s={24} box="0 0 24 24"><path d="M17 6L2 17.500L0 16V15.200L15 1Z" fill="#0065a9" /><path d="M17 18L2 6.500L0 8V8.800L15 23Z" fill="#007acc" /><path d="M17.500 0L24 3V21L17.500 24L15.500 23L17.500 21.500V2.500L15.500 1Z" fill="#1f9cf0" /></Svg>],
  ["Runner", <span className="flex h-6 w-6 items-center justify-center bg-[#2a9d96]"><span className="flex h-4 w-4 items-center justify-center rounded-full bg-[#2196e3] text-white"><FaRunning size={13} /></span></span>],
  ["Notepad", <Svg s={24} box="0 0 24 24"><path d="M8 2l13 2-2 18-4 1Z" fill="#a58a5a" /><path d="M8 2l12 2-4 17L1 18Z" fill="#b8e0ea" /><path d="M8 2l12 2-1 4L6 6Z" fill="#eef7f9" /><path d="M4 12l14 2-2 7L1 18Z" fill="#7fb9c4" /></Svg>],
  ["Calculator", <Svg s={24} box="0 0 24 24"><rect x="3" y="0" width="18" height="24" rx="1" fill="#7c8187" /><rect x="5" y="2" width="14" height="4" fill="#2dd5ee" />{[8, 13, 18].map((y) => [5, 10, 15].map((x) => <rect key={`${x}-${y}`} x={x} y={y} width="4" height="4" fill={x === 15 && y > 8 ? "#14448a" : "#d8dadc"} />))}</Svg>],
  ["Zoom", <span className="flex h-[22px] w-[22px] items-center justify-center rounded-lg bg-[#4a8cff] text-white"><FaVideo size={14} /></span>],
  ["Mail", <span className="relative"><Svg s={26} box="0 0 26 26"><path d="M1 10L13 1l12 9v14H1Z" fill="#0f5fa8" /><path d="M3 8h20v8H3Z" fill="#f2f6fa" /><path d="M1 10l12 8 12-8v14H1Z" fill="#1f8fe0" /><path d="M1 24l12-9 12 9Z" fill="#3fb4f5" /></Svg><span className="absolute left-2 top-3 rounded-full border border-[#8a8d91] bg-[#25282c] px-1 font-['Open_Sans',sans-serif] text-[11px] font-semibold leading-3.5 text-white">99+</span></span>],
  ["Eyedropper", <Svg s={24} box="0 0 24 24"><path d="M14 9l6-7c2-2 5 1 3 3l-6 7Z" fill="#176f93" /><path d="M12 7l6 6" stroke="#0f5573" strokeWidth="3" /><path d="M13 9l3 3-8 8c-2 3-6 4-7 2s0-5 3-6Z" fill="#f6a81c" /><path d="M11 9l4 4-3 2-3-3Z" fill="#fff3d6" /></Svg>],
  ["VLC", <Svg s={24} box="0 0 24 24"><path d="M4 17h16l2 6H2Z" fill="#f08a16" /><path d="M10.700 1h2.600l4.700 18c-3 2-9 2-12 0Z" fill="#f58a1f" /><path d="M9.300 6h5.400l1 3.500H8.300ZM7.200 13.500h9.600l1 3.500c-3 1.500-8.600 1.500-11.600 0Z" fill="#f2f2f2" /></Svg>],
];

function Taskbar() {
  return (
    <footer className="flex h-10 shrink-0 bg-[linear-gradient(100deg,#020b1e_0%,#020d22_24%,#042244_31%,#052c54_50%,#04203f_66%,#010a1c_69%)] font-['Open_Sans','Noto_Sans',sans-serif] text-white">
      <button aria-label="Start" className="flex w-12 shrink-0 items-center justify-center"><FaWindows size={17} /></button>
      <button aria-label="Search" className="flex w-12 shrink-0 items-center justify-center">
        <Svg s={16}><circle cx="10" cy="6" r="5.200" stroke="#fff" strokeWidth="1.300" /><path d="M6.200 9.800L.5 15.500" stroke="#fff" strokeWidth="1.300" /></Svg>
      </button>
      <button aria-label="Task view" className="flex w-[50px] shrink-0 items-center justify-center">
        <Svg s={16}><path d="M.5 1v2.500h10V1M.5 15v-2.500h10V15M.5 5.500h10v5H.5ZM14 0v3M14 8v7" stroke="#fff" strokeWidth="1.200" /><path d="M12.500 4h3v3h-3Z" fill="#fff" /></Svg>
      </button>
      {apps.map(([name, icon]) => (
        <button
          key={name}
          aria-label={name}
          className={`flex w-[49px] shrink-0 items-center justify-center border-b-2 ${
            name === "Chrome" ? "border-[#76f0f2] bg-white/20" : name === "VLC" ? "border-[#76f0f2]" : "border-transparent"
          }`}
        >
          {icon}
        </button>
      ))}
      <div className="ml-auto flex shrink-0 items-center">
        <button aria-label="Show hidden icons" className="mr-3"><Svg s={12} box="0 0 12 12"><path d="M.5 9L6 3.500L11.500 9" stroke="#fff" strokeWidth="1.300" /></Svg></button>
        <button aria-label="Network" className="mr-2">
          <Svg s={14} box="0 0 14 14"><path d="M1 13.500A12.500 12.500 0 0 1 13 1M4 13.500A9.500 9.500 0 0 1 13 4.200M7 13.500A6.500 6.500 0 0 1 13 7.500" stroke="#ddd" strokeWidth="1.100" /><path d="M9 13.500a4 4 0 0 1 4-3.500v3.500Z" fill="#fff" /></Svg>
        </button>
        <button aria-label="Volume" className="mr-2">
          <Svg s={17} box="0 0 17 17"><path d="M1 6.500h2.500L7 3v11L3.500 10.500H1Z" stroke="#fff" strokeWidth="1.100" /><path d="M9 6.500c1 1 1 3 0 4M11 4.500c2 2 2 6 0 8M13.300 2.500c3 3 3 9 0 12" stroke="#fff" strokeWidth="1.100" /></Svg>
        </button>
        <div className="flex flex-col items-center text-[11px] leading-[17px]">
          <span>03:23 p. m.</span>
          <span>03/01/2021</span>
        </div>
        <button aria-label="Notifications" className="ml-[18px] mr-[19px]">
          <Svg s={18} box="0 0 18 18"><path d="M1 1.500h15.500v9M9 14H7.500l-3 3v-3H1V1.500" stroke="#fff" strokeWidth="1.200" /><path d="M14 9a4 4 0 1 1-4.500 6A5 5 0 0 0 14 9Z" fill="#fff" /></Svg>
        </button>
        <span className="mr-1 h-10 w-px bg-[#6b7480]" />
      </div>
    </footer>
  );
}

/* ---------- page ---------- */

const menus = ["File", "Object", "Tools", "Help"];

export default function App() {
  return (
    <div className="flex h-screen flex-col overflow-hidden bg-white font-['Roboto',sans-serif] text-[#222222]">
      <BrowserChrome />
      <div className="relative flex min-h-0 flex-1 flex-col overflow-hidden">
        <div className="flex h-8 shrink-0 items-center bg-[#326690] pl-2 text-white">
          <div className="mr-6 flex items-center font-['Lato',sans-serif] text-[23px] font-black leading-6">
            <span className="flex h-[23px] w-[29px] items-center justify-center rounded-[3px] bg-white text-[#326690]"><span className="pb-1">pg</span></span>
            <span className="pb-1">Admin</span>
          </div>
          <nav className="flex gap-3 text-[14px] font-medium">
            {menus.map((m) => (
              <button key={m} className="flex items-center gap-0.5">{m}<FaAngleDown size={14} /></button>
            ))}
          </nav>
        </div>
        <div className="flex min-h-0 flex-1">
          <Sidebar />
          <Dashboard />
        </div>
        <RoleDialog />
      </div>
      <Taskbar />
    </div>
  );
}
